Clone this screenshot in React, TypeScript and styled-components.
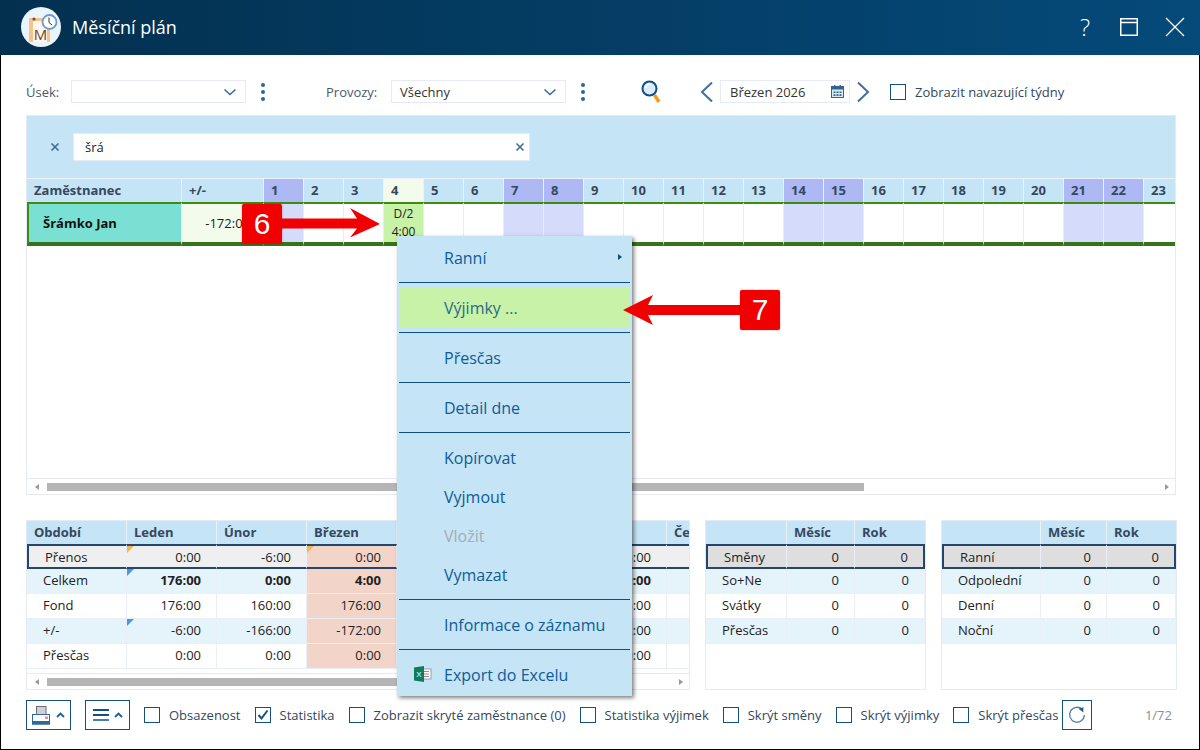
import React from "react";
import styled, { createGlobalStyle } from "styled-components";

const DAYS = Array.from({ length: 23 }, (_, i) => i + 1);
const WEEKEND = [1, 7, 8, 14, 15, 21, 22];

const PERIOD_COLS = [100, 90, 90, 90, 90, 90, 90, 90];
const PERIOD_HEAD = ["Období", "Leden", "Únor", "Březen", "Duben", "Květen", "Červen", "Červenec"];
const PERIOD_ROWS = [
    { name: "Přenos", bold: false, corner: "orange", vals: ["0:00", "-6:00", "0:00", "-172:00", "-172:00", "-166:00", ""] },
    { name: "Celkem", bold: true, corner: "blue", vals: ["176:00", "0:00", "4:00", "0:00", "0:00", "0:00", ""] },
    { name: "Fond", bold: false, corner: "", vals: ["176:00", "160:00", "176:00", "176:00", "160:00", "176:00", ""] },
    { name: "+/-", bold: false, corner: "blue", vals: ["-6:00", "-166:00", "-172:00", "-172:00", "-172:00", "-172:00", ""] },
    { name: "Přesčas", bold: false, corner: "", vals: ["0:00", "0:00", "0:00", "0:00", "0:00", "0:00", ""] },
];

const FOOTER_CHECKS = [
    { label: "Obsazenost", on: false },
    { label: "Statistika", on: true },
    { label: "Zobrazit skryté zaměstnance (0)", on: false },
    { label: "Statistika výjimek", on: false },
    { label: "Skrýt směny", on: false },
    { label: "Skrýt výjimky", on: false },
    { label: "Skrýt přesčas", on: false },
];

const Chevron = () => (
    <svg width="14" height="8" viewBox="0 0 14 8" fill="none">
        <path d="M1.5 1.5 L7 6.5 L12.5 1.5" stroke="#3a6a94" strokeWidth="1.5" />
    </svg>
);

const Kebab = () => (
    <Dots>
        <i />
        <i />
        <i />
    </Dots>
);

const NavArrow = ({ flip }: { flip?: boolean }) => (
    <svg width="14" height="22" viewBox="0 0 14 22" fill="none">
        <path d={flip ? "M2 1.5 L12 11 L2 20.5" : "M12 1.5 L2 11 L12 20.5"} stroke="#41709f" strokeWidth="2" />
    </svg>
);

const SmallX = () => (
    <svg width="10" height="10" viewBox="0 0 10 10" fill="none">
        <path d="M1.5 1.5 L8.5 8.5 M8.5 1.5 L1.5 8.5" stroke="#3f6b96" strokeWidth="1.6" />
    </svg>
);

const Logo = () => (
    <svg width="40" height="40" viewBox="0 0 40 40">
        <circle cx="20" cy="20" r="20" fill="#eaf4fb" />
        <rect x="8" y="11" width="21" height="24" rx="1" fill="#f5c48c" />
        <rect x="12" y="14" width="14" height="21" fill="#fdf8ef" />
        <circle cx="13" cy="12" r="1.6" fill="#8a4a30" />
        <text x="19.5" y="33" textAnchor="middle" fontFamily="'Open Sans', sans-serif" fontSize="15" fill="#7c3b27">M</text>
        <circle cx="28.5" cy="15" r="7" fill="#fff" stroke="#6a9bd0" strokeWidth="1.8" />
        <path d="M28 10.5 V15.5 L31 18" fill="none" stroke="#333" strokeWidth="1" />
    </svg>
);

const Magnifier = () => (
    <svg width="20" height="24" viewBox="0 0 20 24" fill="none">
        <path d="M13.5 15 L18 22" stroke="#f59c12" strokeWidth="3.4" />
        <circle cx="8.5" cy="8.5" r="7" fill="#dcecfa" stroke="#14507f" strokeWidth="2" />
        <path d="M4.5 8 A4.5 4.5 0 0 1 9 4" stroke="#fff" strokeWidth="1.6" />
    </svg>
);

const CalendarIcon = () => (
    <svg width="13" height="13" viewBox="0 0 13 13">
        <rect x="0.5" y="1.5" width="12" height="11" fill="#dcebf6" stroke="#2f658f" />
        <rect x="0.5" y="1.5" width="12" height="3" fill="#2f658f" />
        <rect x="3" y="0" width="1.4" height="2.5" fill="#2f658f" />
        <rect x="8.6" y="0" width="1.4" height="2.5" fill="#2f658f" />
        <path d="M2.5 6.5h2v1.6h-2zM5.5 6.5h2v1.6h-2zM8.5 6.5h2v1.6h-2zM2.5 9.3h2v1.6h-2zM5.5 9.3h2v1.6h-2zM8.5 9.3h2v1.6h-2z" fill="#2f658f" />
    </svg>
);

const PrinterIcon = () => (
    <svg width="19" height="19" viewBox="0 0 19 19">
        <rect x="4.5" y="0.5" width="9.5" height="10" fill="#cfcfd6" stroke="#6d6d78" />
        <rect x="0.5" y="8.5" width="17" height="9.5" fill="#fff" stroke="#2f6a96" />
        <rect x="0" y="15" width="18" height="3.5" fill="#2f6a96" />
        <rect x="13" y="10.5" width="3" height="2.5" fill="#ee8a9a" />
    </svg>
);

const UpCaret = () => (
    <svg width="9" height="6" viewBox="0 0 9 6" fill="none">
        <path d="M1 5 L4.5 1.5 L8 5" stroke="#1f5f8f" strokeWidth="1.8" />
    </svg>
);

const MenuLines = () => (
    <Lines>
        <i />
        <i />
        <i />
    </Lines>
);

const RefreshIcon = () => (
    <svg width="18" height="18" viewBox="0 0 18 18" fill="none">
        <path d="M14.2 3.4 A7.4 7.4 0 1 0 16.4 9" stroke="#4a7fa8" strokeWidth="1.3" />
        <path d="M10.5 2.8 L15.4 1.2 L15.4 6.4 Z" fill="#1f5f8f" />
    </svg>
);

const ExcelIcon = () => (
    <svg width="18" height="16" viewBox="0 0 18 16">
        <rect x="8" y="3" width="9" height="10" fill="#fff" stroke="#8a8a98" strokeWidth="0.8" />
        <path d="M10 5.5h5M10 8h5M10 10.5h5" stroke="#8a7a98" strokeWidth="0.9" />
        <path d="M0 1.5 L10 0 V16 L0 14.5 Z" fill="#117a5c" />
        <text x="5" y="11" textAnchor="middle" fontFamily="'Liberation Sans', sans-serif" fontSize="8" fill="#fff">X</text>
    </svg>
);

const ArrowRight = () => (
    <svg width="98" height="40" viewBox="0 0 98 40">
        <polygon points="0,14.5 75,14.5 68,4 98,20 68,33.5 75,24.5 0,24.5" fill="#f00000" />
    </svg>
);

const ArrowLeft = () => (
    <svg width="117" height="40" viewBox="0 0 117 40">
        <polygon points="117,15 25,15 30,5 0,20 30,35 25,25 117,25" fill="#f00000" />
    </svg>
);

type StatProps = { title?: string; cols: number[]; rows: string[]; width: number };

const StatTable = ({ cols, rows, width }: StatProps) => (
    <TablePanel $w={width}>
        <Row>
            <HeadCell $w={cols[0]} />
            <HeadCell $w={cols[1]}>Měsíc</HeadCell>
            <HeadCell $w={cols[2]} $last>Rok</HeadCell>
        </Row>
        {rows.map((name, i) => (
            <Row key={name}>
                <BodyCell $w={cols[0]} $sel={i === 0} $first $bg={i === 0 ? "#dedede" : i % 2 ? "#e5f3fb" : "#fff"}>
                    <RowName>{name}</RowName>
                </BodyCell>
                <BodyCell $w={cols[1]} $sel={i === 0} $num $bg={i === 0 ? "#dedede" : i % 2 ? "#e5f3fb" : "#fff"}>0</BodyCell>
                <BodyCell $w={cols[2]} $sel={i === 0} $num $end $bg={i === 0 ? "#dedede" : i % 2 ? "#e5f3fb" : "#fff"}>0</BodyCell>
            </Row>
        ))}
    </TablePanel>
);

const App = () => {
    return (
        <Page>
            <Global />

            <TitleBar>
                <TitleLeft>
                    <Logo />
                    <Title>Měsíční plán</Title>
                </TitleLeft>
                <TitleIcons>
                    <Help>?</Help>
                    <svg width="18" height="18" viewBox="0 0 18 18" fill="none">
                        <rect x="0.75" y="0.75" width="16.5" height="16.5" stroke="#fff" strokeWidth="1.5" />
                        <path d="M0 4.5 H18" stroke="#fff" strokeWidth="1.5" />
                    </svg>
                    <svg width="20" height="20" viewBox="0 0 20 20" fill="none">
                        <path d="M1 1 L19 19 M19 1 L1 19" stroke="#fff" strokeWidth="1.3" />
                    </svg>
                </TitleIcons>
            </TitleBar>

            <Content>
                <Toolbar>
                    <FieldGroup $w={300}>
                        <FieldLabel $w={45}>Úsek:</FieldLabel>
                        <Select $w={175}>
                            <span />
                            <Chevron />
                        </Select>
                        <Kebab />
                    </FieldGroup>
                    <FieldGroup $w={315}>
                        <FieldLabel $w={65}>Provozy:</FieldLabel>
                        <Select $w={175}>
                            <span>Všechny</span>
                            <Chevron />
                        </Select>
                        <Kebab />
                        <SearchButton>
                            <Magnifier />
                        </SearchButton>
                    </FieldGroup>
                    <DateGroup>
                        <NavArrow />
                        <DateBox>
                            <span>Březen 2026</span>
                            <CalendarIcon />
                        </DateBox>
                        <NavArrow flip />
                    </DateGroup>
                    <ToolCheck>
                        <CheckBox />
                        <span>Zobrazit navazující týdny</span>
                    </ToolCheck>
                </Toolbar>

                <GridPanel>
                    <FilterBand>
                        <SmallX />
                        <FilterInput>
                            <span>šrá</span>
                            <SmallX />
                        </FilterInput>
                    </FilterBand>

                    <Row>
                        <GridHead $w={155}>Zaměstnanec</GridHead>
                        <GridHead $w={82}>+/-</GridHead>
                        {DAYS.map((d) => (
                            <GridHead key={d} $w={40} $bg={WEEKEND.includes(d) ? "#aeb8f5" : d === 4 ? "#f2fbec" : "#c5e4f6"}>
                                {d}
                            </GridHead>
                        ))}
                    </Row>

                    <Row>
                        <PlanCell $w={155} $bg="#7be0d4" $first>
                            <EmployeeName>Šrámko Jan</EmployeeName>
                        </PlanCell>
                        <PlanCell $w={82} $bg="#f2fbec">
                            <Balance>-172:00</Balance>
                        </PlanCell>
                        {DAYS.map((d) => (
                            <PlanCell key={d} $w={40} $bg={WEEKEND.includes(d) ? "#d5dbfa" : d === 4 ? "#c8f2a8" : "#fff"}>
                                {d === 4 && (
                                    <ShiftText>
                                        D/2
                                        <br />
                                        4:00
                                    </ShiftText>
                                )}
                            </PlanCell>
                        ))}
                    </Row>

                    <GridSpace />

                    <ScrollBar>
                        <ScrollArrow />
                        <ScrollThumb $w={817} />
                        <ScrollArrow $right />
                    </ScrollBar>
                </GridPanel>

                <TablesRow>
                    <TablePanel $w={664}>
                        <Row>
                            {PERIOD_HEAD.map((h, i) => (
                                <HeadCell key={h} $w={PERIOD_COLS[i]}>{h}</HeadCell>
                            ))}
                        </Row>
                        {PERIOD_ROWS.map((r, i) => {
                            const bg = i === 0 ? "#efefef" : i % 2 ? "#e5f3fb" : "#fff";
                            return (
                                <Row key={r.name}>
                                    <BodyCell $w={100} $sel={i === 0} $first $bg={bg}>
                                        <RowName>{r.name}</RowName>
                                    </BodyCell>
                                    {r.vals.map((v, j) => (
                                        <BodyCell
                                            key={j}
                                            $w={90}
                                            $sel={i === 0}
                                            $num
                                            $bold={r.bold}
                                            $bg={j === 2 ? "#f2d4c8" : bg}
                                            $corner={j === 0 || (j === 2 && i === 0) ? r.corner : ""}
                                        >
                                            {v}
                                        </BodyCell>
                                    ))}
                                </Row>
                            );
                        })}
                        <TableScroll>
                            <ScrollBar>
                                <ScrollArrow />
                                <ScrollThumb $w={500} />
                                <ScrollArrow $right />
                            </ScrollBar>
                        </TableScroll>
                    </TablePanel>

                    <StatTable width={221} cols={[81, 68, 70]} rows={["Směny", "So+Ne", "Svátky", "Přesčas"]} />
                    <StatTable width={236} cols={[99, 66, 69]} rows={["Ranní", "Odpolední", "Denní", "Noční"]} />
                </TablesRow>

                <Footer>
                    <IconButton $w={45}>
                        <PrinterIcon />
                        <UpCaret />
                    </IconButton>
                    <IconButton $w={45}>
                        <MenuLines />
                        <UpCaret />
                    </IconButton>
                    {FOOTER_CHECKS.map((c) => (
                        <ToolCheck key={c.label}>
                            <CheckBox>
                                {c.on && (
                                    <svg width="12" height="12" viewBox="0 0 12 12" fill="none">
                                        <path d="M1.5 6 L4.5 9.5 L10.5 1.5" stroke="#14507f" strokeWidth="2" />
                                    </svg>
                                )}
                            </CheckBox>
                            <span>{c.label}</span>
                        </ToolCheck>
                    ))}
                    <RefreshButton>
                        <RefreshIcon />
                    </RefreshButton>
                    <Counter>1/72</Counter>
                </Footer>
            </Content>

            <ContextMenu>
                <MenuItem>
                    Ranní
                    <SubArrow />
                </MenuItem>
                <MenuSep />
                <MenuItem $active>Výjimky ...</MenuItem>
                <MenuSep />
                <MenuItem>Přesčas</MenuItem>
                <MenuSep />
                <MenuItem>Detail dne</MenuItem>
                <MenuSep />
                <MenuItem>Kopírovat</MenuItem>
                <MenuItem>Vyjmout</MenuItem>
                <MenuItem $disabled>Vložit</MenuItem>
                <MenuItem>Vymazat</MenuItem>
                <MenuSep />
                <MenuItem>Informace o záznamu</MenuItem>
                <MenuSep />
                <MenuItem>
                    <MenuIcon>
                        <ExcelIcon />
                    </MenuIcon>
                    Export do Excelu
                </MenuItem>
            </ContextMenu>

            <Callout $left={242} $top={204}>
                <CalloutBox>6</CalloutBox>
                <ArrowRight />
            </Callout>
            <Callout $left={623} $top={290}>
                <ArrowLeft />
                <CalloutBox>7</CalloutBox>
            </Callout>
        </Page>
    );
};

export default App;

const Global = createGlobalStyle`
body {
    margin: 0;
    font-family: "Open Sans", "Liberation Sans", sans-serif;
    font-size: 13px;
    color: #333;
    background: #fff;
}
`;

const Page = styled.div`
width: 1200px;
height: 750px;
position: relative;
overflow: hidden;
display: flex;
flex-direction: column;
background: #fff;
`;

const TitleBar = styled.div`
height: 55px;
flex: none;
display: flex;
align-items: center;
justify-content: space-between;
padding: 0 15px 1px 21px;
box-sizing: border-box;
background: linear-gradient(90deg, #03304f 0%, #054a7a 100%);
`;

const TitleLeft = styled.div`
display: flex;
align-items: center;
gap: 11px;
`;

const Title = styled.div`
font-size: 18px;
color: #fff;
`;

const TitleIcons = styled.div`
display: flex;
align-items: center;
gap: 27px;
`;

const Help = styled.div`
font-size: 24px;
line-height: 26px;
color: #fff;
font-weight: 300;
margin-right: 3px;
`;

const Content = styled.div`
flex: 1;
min-height: 0;
display: flex;
flex-direction: column;
padding: 25px 0 0 25px;
border-left: 1px solid #000;
border-right: 1px solid #000;
border-bottom: 1px solid #000;
`;

const Toolbar = styled.div`
height: 23px;
display: flex;
align-items: center;
color: #4a5a6a;
margin-bottom: 12px;
`;

const FieldGroup = styled.div<{ $w: number }>`
width: ${(p) => p.$w}px;
flex: none;
display: flex;
align-items: center;
`;

const FieldLabel = styled.div<{ $w: number }>`
width: ${(p) => p.$w}px;
flex: none;
`;

const Select = styled.div<{ $w: number }>`
width: ${(p) => p.$w}px;
height: 23px;
box-sizing: border-box;
flex: none;
display: flex;
align-items: center;
justify-content: space-between;
padding: 0 8px 0 8px;
border: 1px solid #e6e9f6;
color: #333;
`;

const Dots = styled.div`
width: 34px;
flex: none;
display: flex;
flex-direction: column;
align-items: center;
gap: 3px;
i {
    width: 4px;
    height: 4px;
    border-radius: 50%;
    background: #2a6794;
}
`;

const SearchButton = styled.div`
margin-left: 41px;
display: flex;
`;

const DateGroup = styled.div`
display: flex;
align-items: center;
gap: 6px;
width: 190px;
flex: none;
margin-left: 59px;
`;

const DateBox = styled.div`
width: 130px;
height: 23px;
box-sizing: border-box;
display: flex;
align-items: center;
justify-content: space-between;
padding: 0 5px 0 9px;
border: 1px solid #e6e9f6;
color: #333;
`;

const ToolCheck = styled.div`
display: flex;
align-items: center;
gap: 9px;
color: #33475b;
white-space: nowrap;
`;

const CheckBox = styled.div`
width: 16px;
height: 16px;
box-sizing: border-box;
flex: none;
display: flex;
align-items: center;
justify-content: center;
border: 1px solid #14507f;
background: #fff;
`;

const GridPanel = styled.div`
width: 1150px;
height: 380px;
flex: none;
box-sizing: border-box;
display: flex;
flex-direction: column;
overflow: hidden;
border: 1px solid #e6e9f6;
border-right-color: #e6e9f6;
`;

const FilterBand = styled.div`
height: 62px;
flex: none;
display: flex;
align-items: center;
gap: 13px;
padding: 0 0 0 23px;
background: #c5e4f6;
`;

const FilterInput = styled.div`
width: 457px;
height: 28px;
box-sizing: border-box;
display: flex;
align-items: center;
justify-content: space-between;
padding: 0 4px 0 11px;
background: #fff;
border: 1px solid #e3edf8;
color: #222;
`;

const Row = styled.div`
display: flex;
flex: none;
`;

const GridHead = styled.div<{ $w: number; $bg?: string }>`
width: ${(p) => p.$w}px;
height: 24px;
flex: none;
box-sizing: border-box;
padding-left: 7px;
line-height: 23px;
font-weight: 700;
color: #34485e;
background: ${(p) => p.$bg || "#c5e4f6"};
border-right: 1px solid #eaf1f9;
border-top: 1px solid #eaf1f9;
`;

const PlanCell = styled.div<{ $w: number; $bg: string; $first?: boolean }>`
width: ${(p) => p.$w}px;
height: 44px;
flex: none;
box-sizing: border-box;
display: flex;
align-items: center;
background: ${(p) => p.$bg};
border-top: 2px solid #3f8a10;
border-bottom: 4px solid #35741a;
border-right: 1px solid #e8ebf8;
border-left: ${(p) => (p.$first ? "2px solid #3f8a10" : "0")};
`;

const EmployeeName = styled.div`
padding-left: 14px;
font-weight: 700;
color: #111;
`;

const Balance = styled.div`
width: 100%;
padding-right: 13px;
box-sizing: border-box;
text-align: right;
color: #222;
`;

const ShiftText = styled.div`
width: 100%;
text-align: center;
font-size: 12px;
line-height: 18px;
color: #222;
`;

const GridSpace = styled.div`
flex: 1;
`;

const ScrollBar = styled.div`
height: 16px;
flex: none;
display: flex;
align-items: center;
box-sizing: border-box;
padding: 0 6px;
border-top: 1px solid #e6e9f6;
`;

const ScrollArrow = styled.div<{ $right?: boolean }>`
width: 0;
height: 0;
border-top: 3px solid transparent;
border-bottom: 3px solid transparent;
${(p) =>
    p.$right
        ? "border-left: 4px solid #999; margin-left: auto;"
        : "border-right: 4px solid #999; margin-left: 2px; margin-right: 8px;"}
`;

const ScrollThumb = styled.div<{ $w: number }>`
width: ${(p) => p.$w}px;
height: 8px;
background: #b5b5b5;
`;

const TablesRow = styled.div`
margin-top: 25px;
display: flex;
gap: 15px;
`;

const TablePanel = styled.div<{ $w: number }>`
width: ${(p) => p.$w}px;
height: 170px;
flex: none;
box-sizing: border-box;
overflow: hidden;
position: relative;
border: 1px solid #e6e9f6;
`;

const TableScroll = styled.div`
position: absolute;
left: 0;
right: 0;
bottom: 0;
`;

const HeadCell = styled.div<{ $w: number; $last?: boolean }>`
width: ${(p) => p.$w}px;
height: 23px;
flex: none;
box-sizing: border-box;
padding-left: 7px;
line-height: 23px;
font-weight: 700;
color: #34485e;
background: #c5e4f6;
border-right: ${(p) => (p.$last ? "0" : "1px solid #eaf1f9")};
white-space: nowrap;
`;

const BodyCell = styled.div<{
    $w: number;
    $bg: string;
    $sel?: boolean;
    $first?: boolean;
    $end?: boolean;
    $num?: boolean;
    $bold?: boolean;
    $corner?: string;
}>`
width: ${(p) => p.$w}px;
height: 25px;
flex: none;
box-sizing: border-box;
position: relative;
line-height: 22px;
white-space: nowrap;
color: #222;
background: ${(p) => p.$bg};
text-align: ${(p) => (p.$num ? "right" : "left")};
padding-right: ${(p) => (p.$num ? "15px" : "0")};
font-weight: ${(p) => (p.$bold ? 700 : 400)};
border-right: ${(p) => (p.$end && p.$sel ? "2px solid #24466a" : "1px solid #eaeef9")};
border-bottom: ${(p) => (p.$sel ? "2px solid #24466a" : "1px solid #eaeef9")};
border-top: ${(p) => (p.$sel ? "2px solid #24466a" : "0")};
border-left: ${(p) => (p.$first && p.$sel ? "2px solid #24466a" : "0")};
${(p) =>
    p.$corner
        ? `&::before {
    content: "";
    position: absolute;
    left: 0;
    top: 0;
    border-top: 7px solid ${p.$corner === "orange" ? "#f8b54a" : "#4c97dc"};
    border-right: 7px solid transparent;
}`
        : ""}
`;

const RowName = styled.div`
padding-left: 16px;
`;

const Footer = styled.div`
margin-top: 10px;
height: 30px;
display: flex;
align-items: center;
gap: 14px;
`;

const IconButton = styled.div<{ $w: number }>`
width: ${(p) => p.$w}px;
height: 30px;
box-sizing: border-box;
flex: none;
display: flex;
align-items: center;
justify-content: center;
gap: 5px;
border: 1px solid #14507f;
`;

const Lines = styled.div`
display: flex;
flex-direction: column;
gap: 3px;
i {
    display: block;
    width: 16px;
    height: 2px;
    background: #14507f;
}
i:last-child {
    background: #4a7fa8;
}
`;

const RefreshButton = styled(IconButton)`
width: 30px;
margin-left: -10px;
`;

const Counter = styled.div`
margin-left: auto;
margin-right: 27px;
color: #8a8f96;
`;

const ContextMenu = styled.div`
position: absolute;
left: 397px;
top: 236px;
width: 235px;
box-sizing: border-box;
padding: 2px;
background: #c5e4f6;
box-shadow: 2px 2px 4px rgba(0, 0, 0, 0.5);
`;

const MenuItem = styled.div<{ $active?: boolean; $disabled?: boolean }>`
height: 39px;
position: relative;
display: flex;
align-items: center;
padding-left: 45px;
font-size: 16px;
color: ${(p) => (p.$disabled ? "#a5acb3" : p.$active ? "#2d6a8c" : "#0f5c96")};
background: ${(p) => (p.$active ? "#c8f2a8" : "transparent")};
`;

const MenuSep = styled.div`
height: 1px;
margin: 5px 0;
background: #0a4e82;
`;

const SubArrow = styled.div`
position: absolute;
right: 8px;
top: 16px;
border-top: 3.5px solid transparent;
border-bottom: 3.5px solid transparent;
border-left: 4px solid #0a4e82;
`;

const MenuIcon = styled.div`
position: absolute;
left: 15px;
top: 11px;
display: flex;
`;

const Callout = styled.div<{ $left: number; $top: number }>`
position: absolute;
left: ${(p) => p.$left}px;
top: ${(p) => p.$top}px;
display: flex;
`;

const CalloutBox = styled.div`
width: 40px;
height: 40px;
flex: none;
display: flex;
align-items: center;
justify-content: center;
border-radius: 2px;
background: #f00000;
color: #fff;
font-family: "Liberation Sans", Arial, sans-serif;
font-size: 30px;
box-shadow: 0 0 2px rgba(120, 0, 0, 0.4);
`;
